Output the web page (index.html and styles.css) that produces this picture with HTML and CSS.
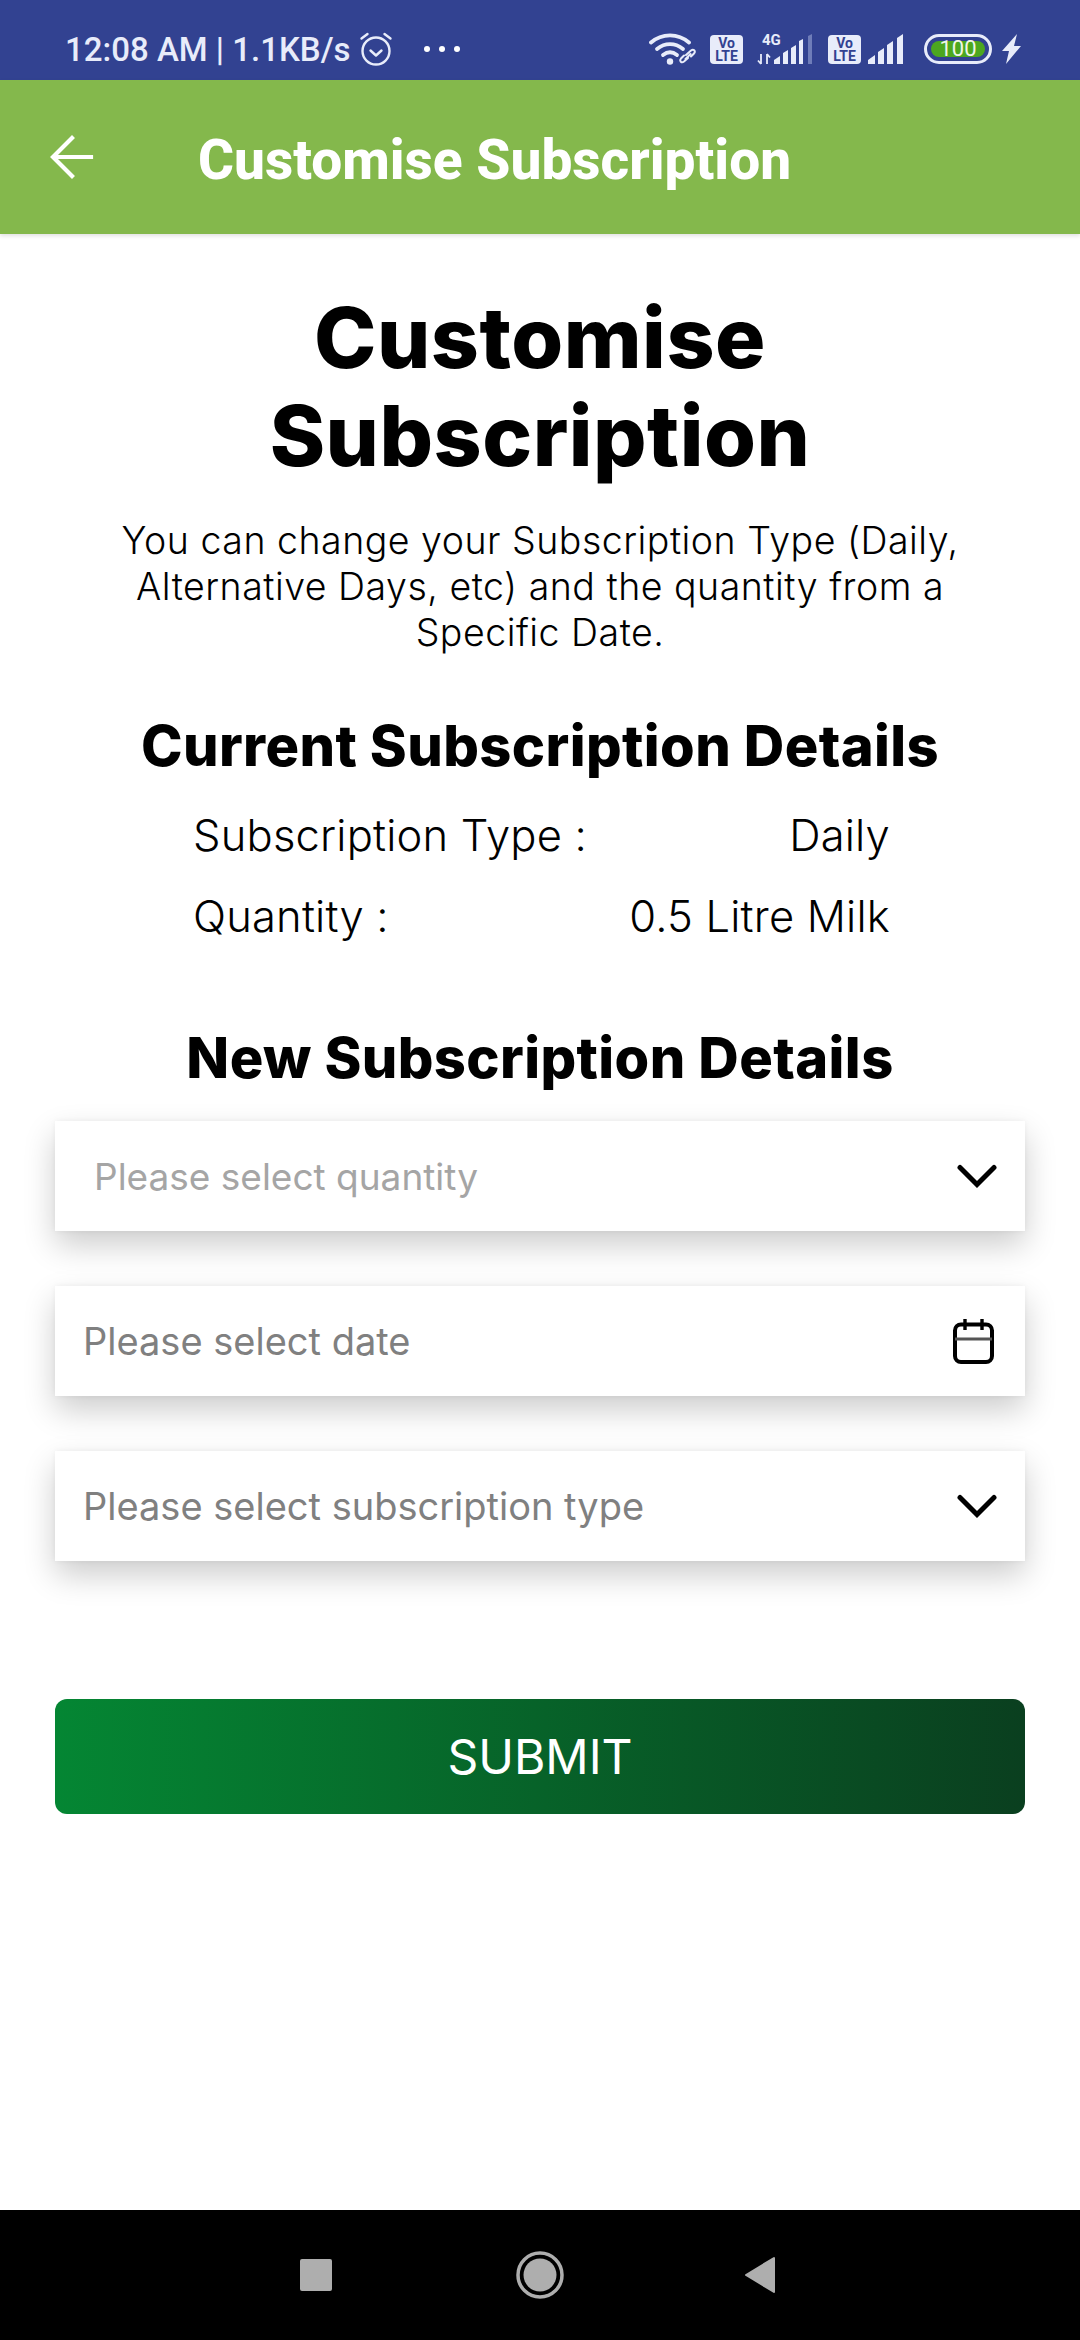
FILE: index.html
```html
<!DOCTYPE html>
<html lang="en">
<head>
    <meta charset="UTF-8">
    <meta name="viewport" content="width=device-width, initial-scale=1.0">
    <title>Customise Subscription</title>
    <link rel="stylesheet" href="styles.css">
</head>
<body>
    <div class="status-bar">
        <div class="status-left">
            <span class="status-text">12:08 AM | 1.1KB/s</span>
            <svg class="alarm" width="36" height="36" viewBox="0 0 36 36" fill="none" stroke="#e8ecfa" stroke-width="2.400" stroke-linecap="round" stroke-linejoin="round">
                <circle cx="18" cy="20" r="13.500"/>
                <path d="M12.500 19.500l5.500 5 5.500-5"/>
                <path d="M3.500 7.500l6-4.500M32.500 7.500l-6-4.500"/>
            </svg>
            <span class="dots"><i></i><i></i><i></i></span>
        </div>
        <div class="status-right">
            <svg class="wifi" width="47" height="32" viewBox="0 0 47 32" fill="none" stroke="#e8ecfa" stroke-linecap="round">
                <path d="M2 9.500C13 0 29 0 40 9.500" stroke-width="3.800"/>
                <path d="M8 16c8-6.500 18-6.500 26 0" stroke-width="3.800"/>
                <path d="M14 22c4.500-3.500 9.500-3.500 14 0" stroke-width="3.800"/>
                <circle cx="21" cy="28.500" r="3.200" fill="#e8ecfa" stroke="none"/>
                <path d="M37 22l5-4.500c2.500-2 5 .5 3 3l-3 3M39 25l-4 3.500c-2.500 2-5-.5-3-3l3-3M36.500 26l5-5" stroke-width="2"/>
            </svg>
            <svg class="volte" width="33" height="29" viewBox="0 0 33 29">
                <rect width="33" height="29" rx="4" fill="#e8ecfa"/>
                <text x="16.500" y="13" text-anchor="middle">Vo</text>
                <text x="16.500" y="25.500" text-anchor="middle">LTE</text>
            </svg>
            <svg class="signal-4g" width="57" height="37" viewBox="0 -6 57 37" fill="#e8ecfa">
                <text x="5" y="11">4G</text>
                <path d="M4 20v10M1 26.500l3 3.500M10 30V20M10 20l3 3.500" stroke="#e8ecfa" stroke-width="1.800" fill="none"/>
                <path d="M17 30v-4l6-4v8zM26 30V19l5-3v14zM34 30V14l5-3v19zM42 30V7l4-2v25z"/>
                <path d="M51 30V2l4-2v30z" fill="#6f7db9"/>
            </svg>
            <svg class="volte" width="33" height="29" viewBox="0 0 33 29">
                <rect width="33" height="29" rx="4" fill="#e8ecfa"/>
                <text x="16.500" y="13" text-anchor="middle">Vo</text>
                <text x="16.500" y="25.500" text-anchor="middle">LTE</text>
            </svg>
            <svg class="signal" width="40" height="30" viewBox="0 0 40 30" fill="#e8ecfa">
                <path d="M0 30v-4l7-5v9zM10 30V18l6-4v16zM19 30V11l6-4v23zM29 30V4l6-4v30z"/>
            </svg>
            <div class="battery"><span class="battery-fill">100</span></div>
            <svg class="bolt" width="20" height="30" viewBox="0 0 20 30" fill="#e8ecfa">
                <path d="M15 0L0 17h7L4 30l15-18h-7z"/>
            </svg>
        </div>
    </div>

    <div class="app-bar">
        <svg class="back-icon" width="44" height="46" viewBox="0 0 44 46" fill="none" stroke="#fff" stroke-width="4.200" stroke-linecap="square">
            <path d="M41 23H4M22 4L3 23l19 19"/>
        </svg>
        <h1 class="app-title">Customise Subscription</h1>
    </div>

    <div class="content">
        <h2 class="page-title">Customise<br>Subscription</h2>
        <p class="intro">You can change your Subscription Type (Daily,<br>Alternative Days, etc) and the quantity from a<br>Specific Date.</p>

        <h3 class="section-title current-title">Current Subscription Details</h3>
        <div class="detail-row"><span>Subscription Type :</span><span>Daily</span></div>
        <div class="detail-row"><span>Quantity :</span><span>0.5 Litre Milk</span></div>

        <h3 class="section-title new-title">New Subscription Details</h3>

        <div class="field field-first">
            <span class="placeholder light">Please select quantity</span>
            <svg class="chevron" width="40" height="24" viewBox="0 0 40 24" fill="none" stroke="#000" stroke-width="5" stroke-linecap="round">
                <path d="M3 3.500L20 20.500 37 3.500"/>
            </svg>
        </div>
        <div class="field">
            <span class="placeholder">Please select date</span>
            <svg class="calendar" width="41" height="45" viewBox="0 0 41 45" fill="none" stroke="#000" stroke-width="4" stroke-linejoin="round">
                <rect x="2" y="5.500" width="37" height="37.500" rx="6"/>
                <path d="M2 20h37" stroke="#555" stroke-width="3"/>
                <path d="M12 0v11M29 0v11" stroke-width="3.400"/>
            </svg>
        </div>
        <div class="field">
            <span class="placeholder">Please select subscription type</span>
            <svg class="chevron" width="40" height="24" viewBox="0 0 40 24" fill="none" stroke="#000" stroke-width="5" stroke-linecap="round">
                <path d="M3 3.500L20 20.500 37 3.500"/>
            </svg>
        </div>

        <button class="submit-btn">SUBMIT</button>
    </div>

    <div class="nav-bar">
        <span class="nav-square"></span>
        <svg class="nav-home" width="48" height="48" viewBox="0 0 48 48">
            <circle cx="24" cy="24" r="22" fill="none" stroke="#aeaeae" stroke-width="3.500"/>
            <circle cx="24" cy="24" r="16.500" fill="#aeaeae"/>
        </svg>
        <svg width="32" height="38" viewBox="0 0 32 38">
            <path d="M30 2v34L2 19z" fill="#aeaeae" stroke="#aeaeae" stroke-width="2" stroke-linejoin="round"/>
        </svg>
    </div>
</body>
</html>
```

FILE: styles.css
```css
* {
    box-sizing: border-box;
}

body {
    width: 1080px;
    height: 2340px;
    margin: 0;
    display: flex;
    flex-direction: column;
    background: white;
    font-family: Inter, "Noto Sans", sans-serif;
    color: black;
    overflow: hidden;
}

/* status bar */
.status-bar {
    height: 80px;
    flex: none;
    display: flex;
    justify-content: space-between;
    align-items: center;
    padding: 18px 58px 0 65px;
    background: #324291;
}
.status-left, .status-right {
    display: flex;
    align-items: center;
}
.status-text {
    font-family: Roboto, sans-serif;
    font-size: 33px;
    font-weight: 500;
    color: #e8ecfa;
}
.alarm {
    margin-left: 7px;
}
.dots {
    display: flex;
    gap: 9px;
    margin-left: 30px;
}
.dots i {
    width: 6px;
    height: 6px;
    border-radius: 50%;
    background: white;
}
.status-right {
    gap: 14px;
}
.volte text {
    font-family: Roboto, sans-serif;
    font-size: 14px;
    font-weight: 700;
    fill: #324291;
}
.signal-4g {
    margin-top: -6px;
}
.signal-4g text {
    font-family: Roboto, sans-serif;
    font-size: 15px;
    font-weight: 700;
}
.signal {
    margin-left: -7px;
}
.battery {
    width: 68px;
    height: 30px;
    padding: 4px;
    border: 3px solid #e8ecfa;
    border-radius: 15px;
    margin-left: 2px;
}
.battery-fill {
    display: block;
    height: 100%;
    border-radius: 9px;
    background: #4ca71f;
    color: #f0f5e8;
    font-family: Roboto, sans-serif;
    font-size: 22px;
    line-height: 16px;
    text-align: center;
}
.bolt {
    margin-left: -4px;
}

/* green header */
.app-bar {
    height: 154px;
    flex: none;
    display: flex;
    align-items: center;
    background: #84b84c;
    padding: 0 0 0 50px;
    box-shadow: 0 2px 4px rgba(0, 0, 0, 0.12);
}
.app-title {
    margin: 5px 0 0 104px;
    font-family: Roboto, sans-serif;
    font-size: 55px;
    font-weight: 800;
    color: white;
}

.content {
    flex: 1;
    padding: 0 55px;
    display: flex;
    flex-direction: column;
    align-items: stretch;
}
.page-title {
    margin: 55px 0 0;
    font-size: 84px;
    line-height: 98px;
    font-weight: 800;
    letter-spacing: 0.5px;
    text-align: center;
}
.intro {
    margin: 33px 0 0;
    font-size: 37.500px;
    font-weight: 350;
    letter-spacing: 0.5px;
    line-height: 46px;
    text-align: center;
}
.section-title {
    margin: 0;
    font-size: 56px;
    line-height: 60px;
    font-weight: 800;
    letter-spacing: 0.4px;
    text-align: center;
}
.current-title {
    margin-top: 60px;
}
.new-title {
    margin-top: 83px;
}
.detail-row {
    display: flex;
    justify-content: space-between;
    padding: 0 135px 0 138px;
    margin-top: 23px;
    font-size: 43.500px;
    font-weight: 350;
    letter-spacing: 0.2px;
    line-height: 58px;
}
.current-title + .detail-row {
    margin-top: 30px;
}

/* form */
.field {
    height: 110px;
    flex: none;
    display: flex;
    justify-content: space-between;
    align-items: center;
    margin-top: 55px;
    padding: 0 28px;
    background: white;
    box-shadow: 0 14px 30px rgba(0, 0, 0, 0.2), 0 0 6px rgba(0, 0, 0, 0.05);
}
.field-first {
    margin-top: 33px;
}
.placeholder {
    font-size: 38px;
    color: #808080;
}
.placeholder.light {
    padding-left: 11px;
    font-size: 37px;
    color: #a5a5a5;
}
.calendar {
    margin-right: 3px;
}
.submit-btn {
    height: 115px;
    flex: none;
    margin-top: 138px;
    border: none;
    border-radius: 12px;
    background: linear-gradient(to right, #048633, #0a3f1f);
    color: white;
    font-family: Inter, sans-serif;
    font-size: 48px;
    cursor: pointer;
}

/* android nav */
.nav-bar {
    height: 130px;
    flex: none;
    display: flex;
    justify-content: center;
    align-items: center;
    gap: 182px;
    padding-right: 4px;
    background: black;
}
.nav-square {
    width: 32px;
    height: 32px;
    border-radius: 2px;
    background: #aeaeae;
}
.nav-home {
    margin: 0 -2px 0 2px;
}
```
